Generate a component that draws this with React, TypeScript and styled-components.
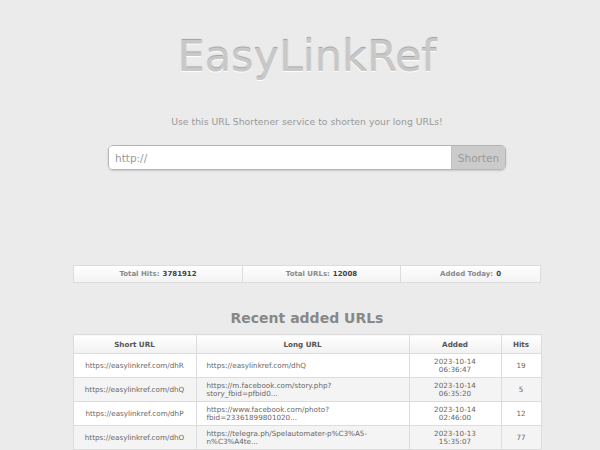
import styled, { createGlobalStyle } from "styled-components"
import { FC } from "react"

/*******************************************************/
const GlobalStyle = createGlobalStyle`
	html, body {
		margin: 0;
		padding: 0;
		background: #ebebeb;
		font-family: "DejaVu Sans", Verdana, sans-serif;
	}
`

interface UrlRow {
	short: string
	long: string[]
	date: string
	time: string
	hits: number
}

const rows: UrlRow[] = [
	{ short: "https://easylinkref.com/dhR", long: ["https://easylinkref.com/dhQ"], date: "2023-10-14", time: "06:36:47", hits: 19 },
	{ short: "https://easylinkref.com/dhQ", long: ["https://m.facebook.com/story.php?", "story_fbid=pfbid0..."], date: "2023-10-14", time: "06:35:20", hits: 5 },
	{ short: "https://easylinkref.com/dhP", long: ["https://www.facebook.com/photo?", "fbid=23361899801020..."], date: "2023-10-14", time: "02:46:00", hits: 12 },
	{ short: "https://easylinkref.com/dhO", long: ["https://telegra.ph/Spelautomater-p%C3%A5-", "n%C3%A4te..."], date: "2023-10-13", time: "15:35:07", hits: 77 },
]

export default function App() {
	return (
		<Page>
			<GlobalStyle />
			<Title>EasyLinkRef</Title>
			<Tagline>Use this URL Shortener service to shorten your long URLs!</Tagline>
			<ShortenForm onSubmit={(e) => e.preventDefault()}>
				<UrlInput placeholder="http://" />
				<ShortenButton type="submit">Shorten</ShortenButton>
			</ShortenForm>

			<Content>
				<Stats>
					<Stat>Total Hits: <b>3781912</b></Stat>
					<Stat>Total URLs: <b>12008</b></Stat>
					<Stat>Added Today: <b>0</b></Stat>
				</Stats>

				<Heading>Recent added URLs</Heading>
				<RecentTable rows={rows} />
			</Content>
		</Page>
	)
}

const RecentTable: FC<{ rows: UrlRow[] }> = ({ rows }) => (
	<Table>
		<colgroup>
			<col style={{ width: 123 }} />
			<col style={{ width: 213 }} />
			<col style={{ width: 92 }} />
			<col style={{ width: 40 }} />
		</colgroup>
		<thead>
			<tr>
				<Th>Short URL</Th>
				<Th>Long URL</Th>
				<Th>Added</Th>
				<Th>Hits</Th>
			</tr>
		</thead>
		<tbody>
			{rows.map((row, index) => (
				<Row key={row.short} $odd={index % 2 === 1}>
					<Td>{row.short}</Td>
					<Td $left>
						{row.long.map((line) => (
							<div key={line}>{line}</div>
						))}
					</Td>
					<Td>
						<div>{row.date}</div>
						<div>{row.time}</div>
					</Td>
					<Td>{row.hits}</Td>
				</Row>
			))}
		</tbody>
	</Table>
)

/*******************************************************/

const Page = styled.div`
	width: 600px;
	height: 450px;
	overflow: hidden;
	box-sizing: border-box;
	padding: 2px 0 0 14px;
	display: flex;
	flex-direction: column;
	align-items: center;
	background: #ebebeb;
`

const Title = styled.h1`
	margin: 29px 0 0;
	font-size: 43px;
	font-weight: normal;
	line-height: 50px;
	color: #c8c8c8;
	text-shadow: 0 1px 1px #fff, 0 -1px 1px #a0a0a0;
	letter-spacing: 0;
`

const Tagline = styled.p`
	margin: 34px 0 0;
	font-size: 9.3px;
	line-height: 14px;
	color: #999;
`

const ShortenForm = styled.form`
	margin-top: 16px;
	display: flex;
	width: 398px;
	height: 26px;
	box-sizing: border-box;
	border: 1px solid #b5b5b5;
	border-radius: 5px;
	overflow: hidden;
	box-shadow: 0 1px 2px rgba(0, 0, 0, 0.15);
`

const UrlInput = styled.input`
	flex: 1;
	min-width: 0;
	border: none;
	outline: none;
	padding: 0 6px;
	font-family: "DejaVu Sans", sans-serif;
	font-size: 10.5px;
	color: #555;
	background: #fff;

	&::placeholder {
		color: #9a9a9a;
	}
`

const ShortenButton = styled.button`
	width: 54px;
	border: none;
	border-left: 1px solid #c2c2c2;
	background: #cbcbcb;
	color: #999;
	font-family: "DejaVu Sans", sans-serif;
	font-size: 10.5px;
	padding: 0;
`

const Content = styled.div`
	width: 468px;
	margin-top: 95px;
	display: flex;
	flex-direction: column;
	align-items: center;
`

const Stats = styled.div`
	width: 100%;
	height: 18px;
	box-sizing: border-box;
	display: grid;
	grid-template-columns: 168px 158px 1fr;
	border: 1px solid #dcdcdc;
	background: linear-gradient(#fff, #f3f3f3);
`

const Stat = styled.div`
	display: flex;
	align-items: center;
	justify-content: center;
	gap: 3px;
	font-size: 7px;
	font-weight: bold;
	color: #8a8a8a;

	& + & {
		border-left: 1px solid #dcdcdc;
	}

	b {
		color: #444;
	}
`

const Heading = styled.h2`
	margin: 25px 0 0;
	font-size: 14px;
	line-height: 20px;
	font-weight: bold;
	color: #888;
`

const Table = styled.table`
	margin-top: 6px;
	width: 100%;
	table-layout: fixed;
	border-collapse: collapse;
	font-size: 7.2px;
	color: #666;
`

const Th = styled.th`
	height: 18px;
	padding: 0;
	border: 1px solid #dcdcdc;
	background: linear-gradient(#fff, #f1f1f1);
	font-weight: bold;
	color: #555;
	text-align: center;
`

const Row = styled.tr<{ $odd: boolean }>`
	height: 24px;
	background: ${({ $odd }) => ($odd ? "#f4f4f4" : "#fff")};
`

const Td = styled.td<{ $left?: boolean }>`
	padding: 0 ${({ $left }) => ($left ? "10px" : "4px")};
	border: 1px solid #dcdcdc;
	text-align: ${({ $left }) => ($left ? "left" : "center")};
	line-height: 8px;
	white-space: nowrap;
	overflow: hidden;
`
